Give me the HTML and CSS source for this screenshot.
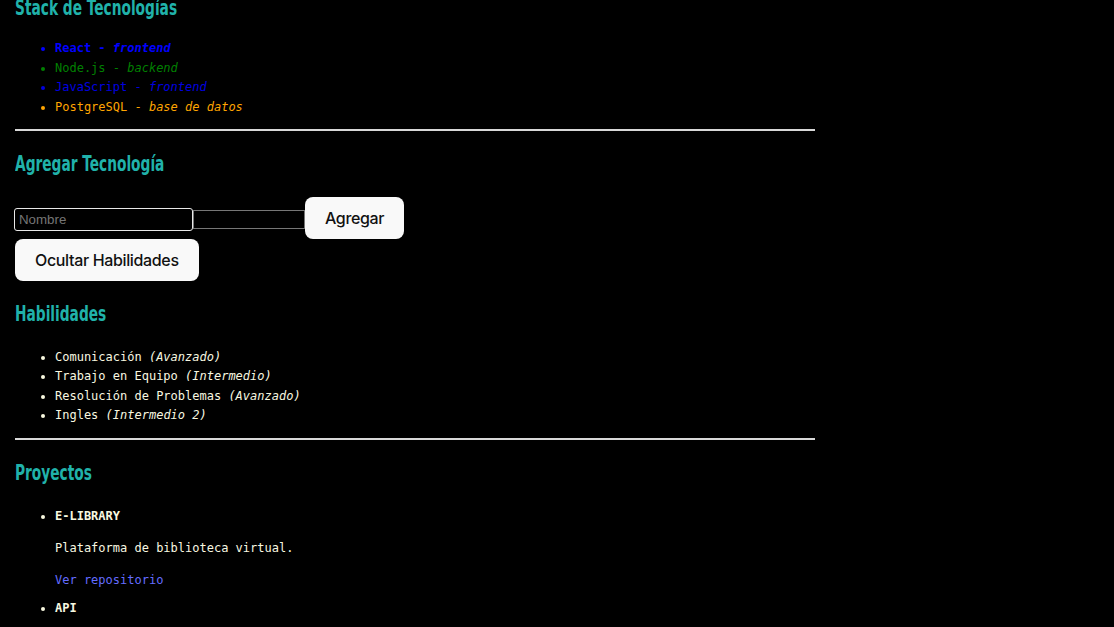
FILE: index.html
```html
<!DOCTYPE html>
<html lang="es">
<head>
<meta charset="utf-8">
<title>Portafolio</title>
<link rel="stylesheet" href="styles.css">
</head>
<body>
<div class="app">
  <section class="section first">
    <h2 class="title">Stack de Tecnologías</h2>
    <ul class="list stack">
      <li class="tech react"><span class="tech-name">React</span> - <em>frontend</em></li>
      <li class="tech node">Node.js - <em>backend</em></li>
      <li class="tech js">JavaScript - <em>frontend</em></li>
      <li class="tech pg">PostgreSQL - <em>base de datos</em></li>
    </ul>
  </section>
  <hr class="divider">
  <section class="section">
    <h2 class="title">Agregar Tecnología</h2>
    <div class="form-row">
      <input class="field field-name" type="text" placeholder="Nombre">
      <input class="field field-type" type="text">
      <button class="btn">Agregar</button>
    </div>
    <button class="btn btn-toggle">Ocultar Habilidades</button>
    <h2 class="title title-skills">Habilidades</h2>
    <ul class="list skills">
      <li>Comunicación <em>(Avanzado)</em></li>
      <li>Trabajo en Equipo <em>(Intermedio)</em></li>
      <li>Resolución de Problemas <em>(Avanzado)</em></li>
      <li>Ingles <em>(Intermedio 2)</em></li>
    </ul>
  </section>
  <hr class="divider">
  <section class="section">
    <h2 class="title">Proyectos</h2>
    <ul class="list projects">
      <li class="project">
        <strong class="project-name">E-LIBRARY</strong>
        <p class="project-desc">Plataforma de biblioteca virtual.</p>
        <a class="project-link" href="#">Ver repositorio</a>
      </li>
      <li class="project">
        <strong class="project-name">API</strong>
      </li>
    </ul>
  </section>
</div>
</body>
</html>
```
FILE: styles.css
```css
html, body {
  margin: 0;
  padding: 0;
  background: #000;
}
body {
  color: #f8f8e0;
  font-family: "DejaVu Sans Mono", "Liberation Mono", monospace;
  font-size: 12px;
}
.app {
  width: 800px;
  padding: 0 15px;
  margin-top: -25px;
}
.title {
  font-family: "DejaVu Sans Condensed", "Liberation Sans", sans-serif;
  font-weight: bold;
  font-size: 22px;
  line-height: 30px;
  color: #20b2aa;
  margin: 17.6px 0 16.6px;
  transform: scaleX(0.695);
  transform-origin: left center;
  white-space: nowrap;
}
.title-skills {
  margin-top: 18.6px;
}
.list {
  margin: 13px 0;
  padding-left: 40px;
  line-height: 19.5px;
}
.stack {
  margin-bottom: 12px;
}
.tech.react { color: #0000ff; font-weight: bold; }
.tech.node { color: #008000; }
.tech.js { color: #0000e0; }
.tech.pg { color: #ffa500; }
.divider {
  margin: 8px 0;
  border: none;
  height: 2px;
  background: #d8d8d8;
}
.form-row {
  display: flex;
  align-items: flex-start;
  margin-top: 18px;
}
.field {
  box-sizing: border-box;
  background: #000;
  color: #fff;
  font-family: "Liberation Sans", Arial, sans-serif;
  font-size: 13.3px;
  padding: 1px 4px;
}
.field::placeholder { color: #757575; }
.field-name {
  width: 179px;
  height: 23px;
  margin: 11px 0 0 -1px;
  border: 1px solid #e8e8e8;
  border-radius: 3px;
}
.field-type {
  width: 112px;
  height: 19px;
  margin: 13px 0 0 0;
  border: 1px solid #767676;
  border-radius: 0;
}
.btn {
  display: block;
  box-sizing: border-box;
  height: 42px;
  padding: 0 19px;
  border: 1px solid transparent;
  border-radius: 8px;
  background: #f9f9f9;
  color: #111;
  font-family: Inter, "Noto Sans", sans-serif;
  font-weight: 500;
  font-size: 16px;
  letter-spacing: -0.35px;
  cursor: pointer;
}
.skills {
  margin-top: 18.6px;
  margin-bottom: 12px;
}
.projects {
  margin-top: 19px;
}
.project-name {
  display: block;
  font-weight: bold;
}
.project-desc {
  margin: 12.5px 0;
}
.project-link {
  display: block;
  color: #646cff;
  text-decoration: none;
  margin-bottom: 8.5px;
}
```
